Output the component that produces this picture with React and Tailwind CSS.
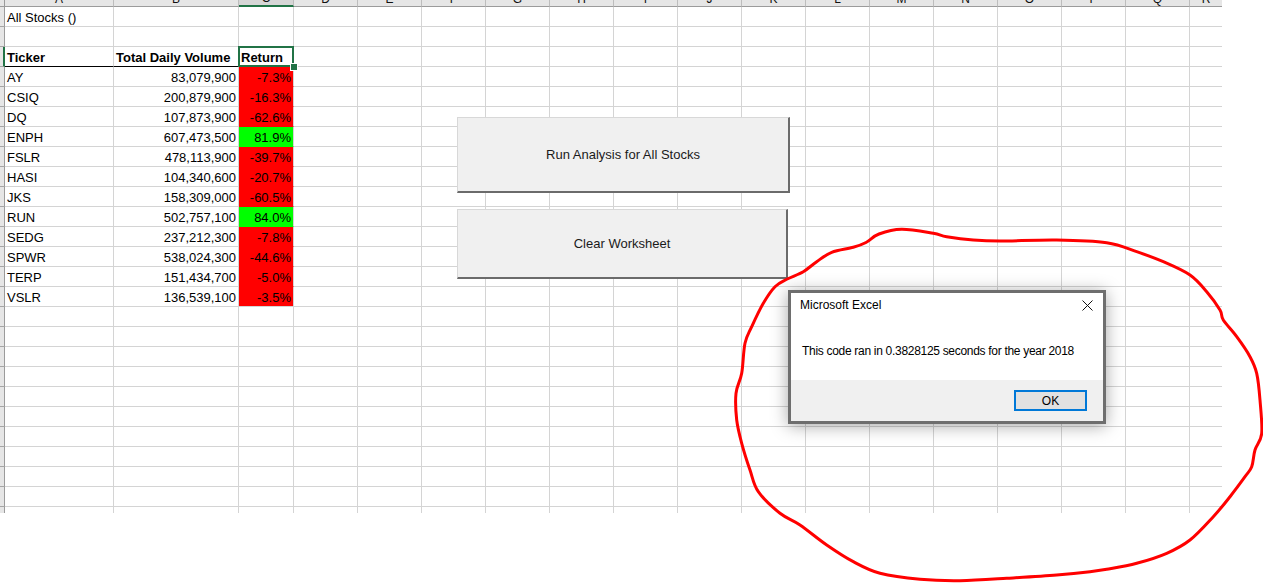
import React from 'react'

const LETTERS = ['A', 'B', 'C', 'D', 'E', 'F', 'G', 'H', 'I', 'J', 'K', 'L', 'M', 'N', 'O', 'P', 'Q', 'R']

const STOCKS = [
  ['AY', '83,079,900', '-7.3%', false],
  ['CSIQ', '200,879,900', '-16.3%', false],
  ['DQ', '107,873,900', '-62.6%', false],
  ['ENPH', '607,473,500', '81.9%', true],
  ['FSLR', '478,113,900', '-39.7%', false],
  ['HASI', '104,340,600', '-20.7%', false],
  ['JKS', '158,309,000', '-60.5%', false],
  ['RUN', '502,757,100', '84.0%', true],
  ['SEDG', '237,212,300', '-7.8%', false],
  ['SPWR', '538,024,300', '-44.6%', false],
  ['TERP', '151,434,700', '-5.0%', false],
  ['VSLR', '136,539,100', '-3.5%', false],
]

// hand-drawn loop around the message box
const LOOP = [
  [901.7, 229.3], [933.3, 233.3], [946.7, 236.7], [973.3, 240], [1000, 241], [1056.7, 240],
  [1106.7, 242.7], [1136.7, 251.7], [1163.3, 261.7], [1190, 275], [1206.7, 291.7], [1220, 310],
  [1223.3, 320], [1236.7, 336.7], [1250, 356.7], [1256.7, 373.3], [1260, 400], [1261.7, 433.3],
  [1255, 450], [1251.7, 466.7], [1245, 476.7], [1230, 496.7], [1213.3, 516.7], [1190, 540],
  [1166.7, 553.3], [1136.7, 563.3], [1106.7, 569.3], [1090, 571.7], [1056.7, 575], [1006.7, 578.3],
  [960, 580.7], [920, 579.3], [880, 573.3], [853.3, 561.7], [826.7, 545], [800, 525], [780, 513.3],
  [758.3, 491.7], [750, 470], [741.7, 443.3], [736.7, 420], [736, 393.3], [741.7, 373.3],
  [745, 343.3], [751.7, 326.7], [763.3, 303.3], [775, 286.7], [786.7, 279.3], [803.3, 271.7],
  [816.7, 261.7], [831.7, 252.3], [853.3, 247.3], [866, 242.5], [879, 234],
]

function smoothLoop(pts) {
  const n = pts.length
  let d = `M${pts[0][0]},${pts[0][1]}`
  for (let i = 0; i < n; i++) {
    const p0 = pts[(i - 1 + n) % n]
    const p1 = pts[i]
    const p2 = pts[(i + 1) % n]
    const p3 = pts[(i + 2) % n]
    const c1 = [p1[0] + (p2[0] - p0[0]) / 6, p1[1] + (p2[1] - p0[1]) / 6]
    const c2 = [p2[0] - (p3[0] - p1[0]) / 6, p2[1] - (p3[1] - p1[1]) / 6]
    d += ` C${c1[0].toFixed(1)},${c1[1].toFixed(1)} ${c2[0].toFixed(1)},${c2[1].toFixed(1)} ${p2[0]},${p2[1]}`
  }
  return d
}

function HeaderRow() {
  return (
    <>
      <div className="bg-[#e6e6e6] border-r border-b border-[#9b9b9b]" />
      {LETTERS.map(l => {
        const cls =
          l === 'C'
            ? 'flex items-end justify-center overflow-hidden bg-[#d6d6d6] border-r border-r-[#bdbdbd] border-b-2 border-b-[#217346]'
            : l === 'R'
              ? 'flex items-end justify-center overflow-hidden bg-[#e6e6e6] border-b border-b-[#9b9b9b]'
              : 'flex items-end justify-center overflow-hidden bg-[#e6e6e6] border-r border-r-[#bdbdbd] border-b border-b-[#9b9b9b]'
        return (
          <div key={l} className={cls}>
            <span className="mb-[1px] text-[12px] leading-[12px] text-[#111]">{l}</span>
          </div>
        )
      })}
    </>
  )
}

function SheetRow({ n }) {
  const stock = n >= 4 && n <= 15 ? STOCKS[n - 4] : null
  const isHead = n === 3
  const cells = []

  cells.push(
    <div
      key="rh"
      className={
        isHead
          ? 'bg-[#e6e6e6] border-r-2 border-r-[#217346] border-b border-b-[#a6a6a6]'
          : 'bg-[#e6e6e6] border-r border-r-[#9b9b9b] border-b border-b-[#a6a6a6]'
      }
    />
  )

  // column A
  cells.push(
    <div
      key="A"
      className={
        isHead
          ? 'border-r border-r-[#d4d4d4] border-b border-b-black px-[2px] pt-[2px] leading-[17px] whitespace-nowrap font-bold'
          : 'border-r border-b border-[#d4d4d4] px-[2px] pt-[2px] leading-[17px] whitespace-nowrap'
      }
    >
      {n === 1 ? 'All Stocks ()' : isHead ? 'Ticker' : stock ? stock[0] : ''}
    </div>
  )

  // column B
  cells.push(
    <div
      key="B"
      className={
        isHead
          ? 'border-r border-r-[#d4d4d4] border-b border-b-black px-[2px] pt-[2px] leading-[17px] whitespace-nowrap font-bold'
          : 'border-r border-b border-[#d4d4d4] px-[2px] pt-[2px] leading-[17px] whitespace-nowrap text-right'
      }
    >
      {isHead ? 'Total Daily Volume' : stock ? stock[1] : ''}
    </div>
  )

  // column C
  if (isHead) {
    cells.push(
      <div key="C" className="relative border-r border-b border-[#d4d4d4] px-[2px] pt-[2px] leading-[17px] font-bold">
        Return
        <div className="absolute -left-px -top-px w-[56px] h-[21px] border-2 border-[#217346]" />
        <div className="absolute left-[52px] top-[17px] w-[6px] h-[6px] bg-[#217346] ring-1 ring-white" />
      </div>
    )
  } else if (stock) {
    const last = n === 15
    const cls = stock[3]
      ? 'bg-[#00ff00] border-r border-r-[#d4d4d4] border-b border-b-[#00ff00] px-[2px] pt-[2px] leading-[17px] text-right'
      : last
        ? 'bg-[#ff0000] border-r border-r-[#d4d4d4] border-b border-b-[#d4d4d4] px-[2px] pt-[2px] leading-[17px] text-right'
        : 'bg-[#ff0000] border-r border-r-[#d4d4d4] border-b border-b-[#ff0000] px-[2px] pt-[2px] leading-[17px] text-right'
    cells.push(
      <div key="C" className={cls}>
        {stock[2]}
      </div>
    )
  } else {
    cells.push(<div key="C" className="border-r border-b border-[#d4d4d4]" />)
  }

  for (let i = 0; i < 14; i++) {
    cells.push(<div key={'x' + i} className="border-r border-b border-[#d4d4d4]" />)
  }
  cells.push(<div key="R" className="border-b border-[#d4d4d4]" />)
  return <>{cells}</>
}

function TailRow() {
  return (
    <>
      <div className="bg-[#e6e6e6] border-r border-r-[#9b9b9b]" />
      {LETTERS.slice(0, 17).map(l => (
        <div key={l} className="border-r border-[#d4d4d4]" />
      ))}
      <div />
    </>
  )
}

function SheetButton({ className, children }) {
  return (
    <div
      className={`absolute flex items-center justify-center bg-[#f0f0f0] border-t border-l border-t-[#d8d8d8] border-l-[#d8d8d8] border-r-2 border-b-2 border-r-[#6b6b6b] border-b-[#6b6b6b] text-[13px] text-[#1a1a1a] ${className}`}
    >
      {children}
    </div>
  )
}

function MessageBox() {
  return (
    <div className="absolute left-[788px] top-[290px] w-[318px] h-[134px] border-[3px] border-[#6e6e6e] bg-white shadow-[0_2px_16px_rgba(0,0,0,0.35)] flex flex-col font-['Liberation_Sans',Arial,sans-serif] text-black">
      <div className="h-[24px] flex items-center justify-between pl-[9px] pr-[10px]">
        <span className="text-[12px] leading-[16px]">Microsoft Excel</span>
        <svg width="11" height="11" viewBox="0 0 11 11">
          <path d="M0.5 0.5 L10.5 10.5 M10.5 0.5 L0.5 10.5" stroke="#111" strokeWidth="1" fill="none" />
        </svg>
      </div>
      <div className="h-[63px] pl-[11px] pt-[26px]">
        <p className="text-[12px] leading-[16px] tracking-[-0.3px] whitespace-nowrap">
          This code ran in 0.3828125 seconds for the year 2018
        </p>
      </div>
      <div className="flex-1 bg-[#f0f0f0] flex justify-end items-start pt-[10px] pr-[16px]">
        <button className="w-[73px] h-[21px] border-2 border-[#0078d7] bg-[#e1e1e1] text-[12px] leading-[16px] flex items-center justify-center">
          OK
        </button>
      </div>
    </div>
  )
}

export default function App() {
  const rows = []
  for (let n = 1; n <= 25; n++) rows.push(<SheetRow key={n} n={n} />)

  return (
    <div className="relative w-[1263px] h-[583px] overflow-hidden bg-white text-black font-['Liberation_Sans',Arial,sans-serif]">
      <div className="grid grid-cols-[5px_109px_125px_55px_repeat(14,64px)_32px] grid-rows-[7px_repeat(25,20px)_6px] w-[1222px] text-[13px]">
        <HeaderRow />
        {rows}
        <TailRow />
      </div>

      <SheetButton className="left-[457px] top-[117px] w-[333px] h-[76px]">Run Analysis for All Stocks</SheetButton>
      <SheetButton className="left-[457px] top-[209px] w-[331px] h-[70px]">Clear Worksheet</SheetButton>

      <MessageBox />

      <svg className="absolute inset-0 pointer-events-none" width="1263" height="583" viewBox="0 0 1263 583">
        <path d={smoothLoop(LOOP)} fill="none" stroke="#ff0000" strokeWidth="3" strokeLinejoin="round" />
      </svg>
    </div>
  )
}
